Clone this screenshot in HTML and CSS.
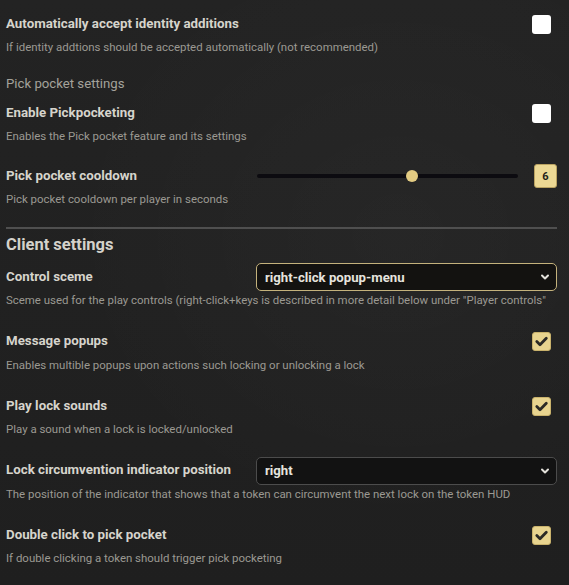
FILE: index.html
```html
<!DOCTYPE html>
<html lang="en">
<head>
<meta charset="utf-8">
<title>Settings</title>
<link rel="stylesheet" href="styles.css">
</head>
<body>
<div class="settings">
  <div class="group">
    <div class="row">
      <label class="label">Automatically accept identity additions</label>
      <span class="check"></span>
    </div>
    <p class="hint">If identity addtions should be accepted automatically (not recommended)</p>
  </div>

  <h3 class="subsection">Pick pocket settings</h3>

  <div class="group">
    <div class="row">
      <label class="label">Enable Pickpocketing</label>
      <span class="check"></span>
    </div>
    <p class="hint">Enables the Pick pocket feature and its settings</p>
  </div>

  <div class="group group-range">
    <div class="row">
      <label class="label">Pick pocket cooldown</label>
      <div class="range">
        <div class="track"><span class="thumb" style="left:59.2%"></span></div>
        <span class="range-value">6</span>
      </div>
    </div>
    <p class="hint">Pick pocket cooldown per player in seconds</p>
  </div>

  <h2 class="section">Client settings</h2>

  <div class="group">
    <div class="row">
      <label class="label">Control sceme</label>
      <div class="select focused">
        <span>right-click popup-menu</span>
        <svg class="chev" viewBox="0 0 10 10" width="10" height="10"><path d="M2 3.5 L5 6.5 L8 3.5" fill="none" stroke="#e4e2dc" stroke-width="2" stroke-linecap="round" stroke-linejoin="round"/></svg>
      </div>
    </div>
    <p class="hint">Sceme used for the play controls (right-click+keys is described in more detail below under "Player controls"</p>
  </div>

  <div class="group">
    <div class="row">
      <label class="label">Message popups</label>
      <span class="check on"><svg viewBox="0 0 19 19" width="19" height="19"><path d="M4.8 9.6 L8 12.8 L14.3 6.2" fill="none" stroke="#2b2a26" stroke-width="2.8" stroke-linecap="round" stroke-linejoin="round"/></svg></span>
    </div>
    <p class="hint">Enables multible popups upon actions such locking or unlocking a lock</p>
  </div>

  <div class="group">
    <div class="row">
      <label class="label">Play lock sounds</label>
      <span class="check on"><svg viewBox="0 0 19 19" width="19" height="19"><path d="M4.8 9.6 L8 12.8 L14.3 6.2" fill="none" stroke="#2b2a26" stroke-width="2.8" stroke-linecap="round" stroke-linejoin="round"/></svg></span>
    </div>
    <p class="hint">Play a sound when a lock is locked/unlocked</p>
  </div>

  <div class="group">
    <div class="row">
      <label class="label">Lock circumvention indicator position</label>
      <div class="select">
        <span>right</span>
        <svg class="chev" viewBox="0 0 10 10" width="10" height="10"><path d="M2 3.5 L5 6.5 L8 3.5" fill="none" stroke="#e4e2dc" stroke-width="2" stroke-linecap="round" stroke-linejoin="round"/></svg>
      </div>
    </div>
    <p class="hint">The position of the indicator that shows that a token can circumvent the next lock on the token HUD</p>
  </div>

  <div class="group">
    <div class="row">
      <label class="label">Double click to pick pocket</label>
      <span class="check on"><svg viewBox="0 0 19 19" width="19" height="19"><path d="M4.8 9.6 L8 12.8 L14.3 6.2" fill="none" stroke="#2b2a26" stroke-width="2.8" stroke-linecap="round" stroke-linejoin="round"/></svg></span>
    </div>
    <p class="hint">If double clicking a token should trigger pick pocketing</p>
  </div>
</div>
</body>
</html>
```
FILE: styles.css
```css
html, body {
  margin: 0;
  padding: 0;
}
body {
  width: 569px;
  height: 585px;
  overflow: hidden;
  background-color: #212121;
  background-image:
    radial-gradient(ellipse at 70% 40%, rgba(255,255,255,0.025), rgba(0,0,0,0) 60%),
    linear-gradient(180deg, #232323 0%, #1f1f1f 100%);
  font-family: Roboto, "Liberation Sans", sans-serif;
  color: #d9d7d0;
}
.settings {
  padding: 10px 12px 0 6px;
  display: flex;
  flex-direction: column;
}
.group {
  display: flex;
  flex-direction: column;
  margin-bottom: 19.5px;
}
.group-range {
  margin-top: -1.5px;
}
.row {
  display: flex;
  align-items: center;
  height: 28px;
}
.label {
  flex: 1;
  font-size: 13.3px;
  font-weight: 700;
  line-height: 16px;
  margin-top: -1px;
  color: #d6d4cc;
  white-space: nowrap;
}
.hint {
  margin: 1px 0 0;
  font-size: 11.45px;
  line-height: 16px;
  color: #9b9992;
  white-space: nowrap;
}
.subsection {
  margin: -0.5px 0 5px;
  font-size: 13.2px;
  font-weight: 400;
  line-height: 20px;
  color: #a4a29b;
}
.section {
  margin: 0 0 6px;
  padding-top: 4.5px;
  border-top: 2px solid #4f4f4f;
  font-size: 16.5px;
  font-weight: 700;
  line-height: 24px;
  color: #d4d2cb;
}
.check {
  width: 19px;
  height: 19px;
  box-sizing: border-box;
  border-radius: 3px;
  background: #ffffff;
  margin-right: 6px;
  display: flex;
  align-items: center;
  justify-content: center;
}
.check.on {
  background: #e8d48f;
  border: 1px solid #c9b26c;
}
.check.on svg {
  display: block;
  margin: -1px;
}
.range {
  width: 301px;
  display: flex;
  align-items: center;
  gap: 16px;
}
.track {
  position: relative;
  flex: 1;
  height: 4px;
  margin-left: 1px;
  border-radius: 2px;
  background: #0c0b10;
}
.thumb {
  position: absolute;
  top: 50%;
  width: 12px;
  height: 12px;
  margin: -6px 0 0 -6px;
  border-radius: 50%;
  background: #e3cb82;
}
.range-value {
  width: 23px;
  height: 24px;
  box-sizing: border-box;
  border-radius: 3px;
  background: #ecd894;
  border: 1px solid #b9a261;
  color: #1e1d1a;
  font-size: 11px;
  font-weight: 700;
  display: flex;
  align-items: center;
  justify-content: center;
}
.select {
  width: 301px;
  height: 28px;
  box-sizing: border-box;
  border: 1px solid #4c4c4c;
  border-radius: 5px;
  background: #121212;
  display: flex;
  align-items: center;
  justify-content: space-between;
  padding: 0 6px 0 8px;
  font-size: 13.2px;
  font-weight: 700;
  color: #e6e4de;
}
.select.focused {
  border-color: #c4b27c;
  background: #131210;
}
.chev {
  display: block;
}
```
